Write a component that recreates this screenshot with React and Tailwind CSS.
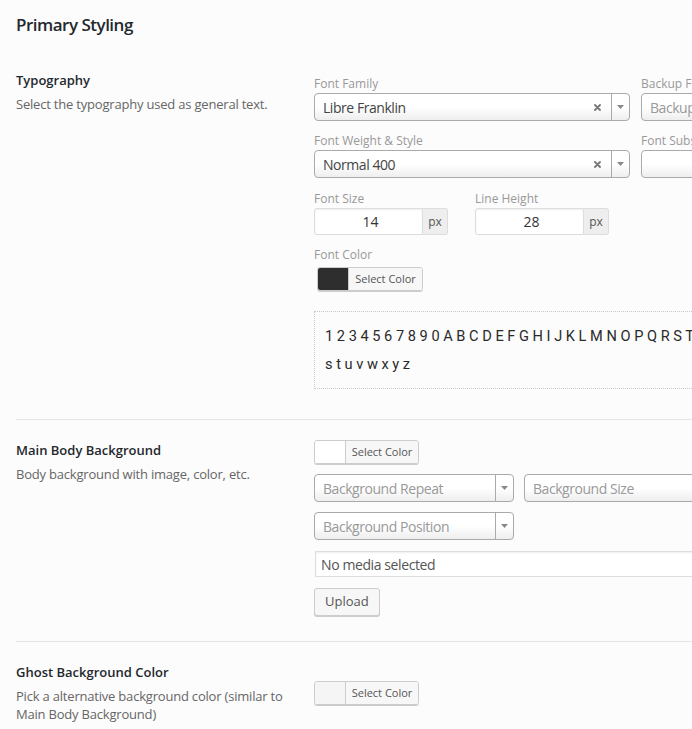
import React from "react";

function FieldLabel({ children, className = "" }) {
  return (
    <div className={`h-4 whitespace-nowrap text-[12px] leading-5 text-[#999] ${className}`}>
      {children}
    </div>
  );
}

function ClearX() {
  return (
    <svg width="7" height="7" viewBox="0 0 7 7" className="mr-[10px] shrink-0">
      <path d="M1 1l5 5M6 1L1 6" stroke="#777" strokeWidth="1.8" strokeLinecap="round" />
    </svg>
  );
}

function Arrow() {
  return (
    <span className="flex h-full w-[18px] shrink-0 items-center justify-center border-l border-[#aaa]">
      <svg width="7" height="4" viewBox="0 0 7 4">
        <path d="M0 0h7L3.5 4z" fill="#888" />
      </svg>
    </span>
  );
}

function Select({ value, placeholder, clear = false, arrow = true, className = "" }) {
  return (
    <div
      className={`flex h-[28px] items-center overflow-hidden rounded-[4px] border border-[#aaa] bg-gradient-to-b from-white from-50% to-[#eee] ${className}`}
    >
      <span
        className={`flex-1 truncate pl-2 text-[14px] tracking-[-0.45px] ${value ? "text-[#444]" : "text-[#999]"}`}
      >
        {value || placeholder}
      </span>
      {clear && <ClearX />}
      {arrow && <Arrow />}
    </div>
  );
}

function UnitInput({ value }) {
  return (
    <div className="flex h-[27px] w-[134px]">
      <div className="flex flex-1 items-center justify-center rounded-l-[3px] border border-[#ddd] bg-white pl-1 text-[14px] text-[#333] shadow-[inset_0_1px_2px_rgba(0,0,0,0.07)]">
        {value}
      </div>
      <div className="flex w-[25px] items-center justify-center rounded-r-[3px] border border-l-0 border-[#ddd] bg-[#eee] text-[12px] text-[#555]">
        px
      </div>
    </div>
  );
}

function ColorButton({ swatch, className = "" }) {
  return (
    <div
      className={`flex h-[24px] overflow-hidden rounded-[3px] border border-[#ccc] shadow-[0_1px_0_#ccc] ${className}`}
    >
      <span className={`w-[30px] shrink-0 ${swatch}`} />
      <span className="flex flex-1 items-center justify-center border-l border-[#ccc] bg-[#f7f7f7] text-[11px] text-[#555]">
        Select Color
      </span>
    </div>
  );
}

function RowHead({ title, desc }) {
  return (
    <div className="w-[314px] shrink-0 pl-4">
      <div className="text-[13px] font-semibold leading-5 text-[#23282d]">{title}</div>
      <p className="mt-[5px] w-[290px] text-[13px] leading-[18px] tracking-[-0.2px] text-[#666]">
        {desc}
      </p>
    </div>
  );
}

export default function App() {
  return (
    <div className="h-[729px] w-[692px] overflow-hidden bg-[#fcfcfc] font-['Open_Sans','Noto_Sans',sans-serif]">
      <h2 className="h-[70px] pl-4 pt-[14px] text-[17px] font-semibold leading-[22px] tracking-[-0.5px] text-[#23282d]">
        Primary Styling
      </h2>

      {/* Typography */}
      <div className="flex pb-[30px]">
        <RowHead title="Typography" desc="Select the typography used as general text." />
        <div className="pt-[4px]">
          <div className="flex gap-[11px]">
            <div className="w-[316px]">
              <FieldLabel className="mb-[3px]">Font Family</FieldLabel>
              <Select value="Libre Franklin" clear />
            </div>
            <div className="w-[316px]">
              <FieldLabel className="mb-[3px]">Backup Font Family</FieldLabel>
              <Select placeholder="Backup Font Family" />
            </div>
          </div>
          <div className="mt-[10px] flex gap-[11px]">
            <div className="w-[316px]">
              <FieldLabel className="mb-[3px]">Font Weight &amp; Style</FieldLabel>
              <Select value="Normal 400" clear />
            </div>
            <div className="w-[316px]">
              <FieldLabel className="mb-[3px]">Font Subsets</FieldLabel>
              <Select placeholder="" />
            </div>
          </div>
          <div className="mt-[11px] flex gap-[27px]">
            <div>
              <FieldLabel className="mb-[3px]">Font Size</FieldLabel>
              <UnitInput value="14" />
            </div>
            <div>
              <FieldLabel className="mb-[3px]">Line Height</FieldLabel>
              <UnitInput value="28" />
            </div>
          </div>
          <div className="mt-[10px]">
            <FieldLabel className="mb-[6px]">Font Color</FieldLabel>
            <ColorButton swatch="bg-[#2e2e2e]" className="ml-[3px] w-[106px]" />
          </div>
          <div className="mt-[20px] w-[720px] border border-dotted border-[#c8c8c8] p-[10px] font-['Roboto','Liberation_Sans',sans-serif] text-[14.6px] leading-[28px] text-[#2a2a2a]">
            <div className="whitespace-nowrap">
              1 2 3 4 5 6 7 8 9 0 A B C D E F G H I J K L M N O P Q R S T U V W X Y Z a b c d e f g h i j k l m n o p q r
            </div>
            <div className="whitespace-nowrap">s t u v w x y z</div>
          </div>
        </div>
      </div>

      <div className="ml-4 border-t border-[#e5e5e5]" />

      {/* Main Body Background */}
      <div className="flex pb-[25px] pt-[20px]">
        <RowHead title="Main Body Background" desc="Body background with image, color, etc." />
        <div>
          <ColorButton swatch="bg-white" className="w-[105px]" />
          <div className="mt-[10px] flex gap-[10px]">
            <Select placeholder="Background Repeat" className="w-[200px]" />
            <Select placeholder="Background Size" className="w-[200px]" />
          </div>
          <Select placeholder="Background Position" className="mt-[10px] w-[200px]" />
          <div className="ml-px mt-[11px] flex h-[26px] w-[420px] items-center border border-[#ddd] bg-white pl-[5px] text-[14px] tracking-[-0.4px] text-[#555] shadow-[inset_0_1px_2px_rgba(0,0,0,0.07)]">
            No media selected
          </div>
          <button className="mt-[11px] h-[28px] rounded-[3px] border border-[#ccc] bg-[#f7f7f7] px-[10px] text-[13px] text-[#555] shadow-[0_1px_0_#ccc]">
            Upload
          </button>
        </div>
      </div>

      <div className="ml-4 border-t border-[#e5e5e5]" />

      {/* Ghost Background Color */}
      <div className="flex pt-[20px]">
        <RowHead
          title="Ghost Background Color"
          desc="Pick a alternative background color (similar to Main Body Background)"
        />
        <div>
          <ColorButton swatch="bg-[#f5f5f5]" className="mt-[19px] w-[105px]" />
        </div>
      </div>
    </div>
  );
}
